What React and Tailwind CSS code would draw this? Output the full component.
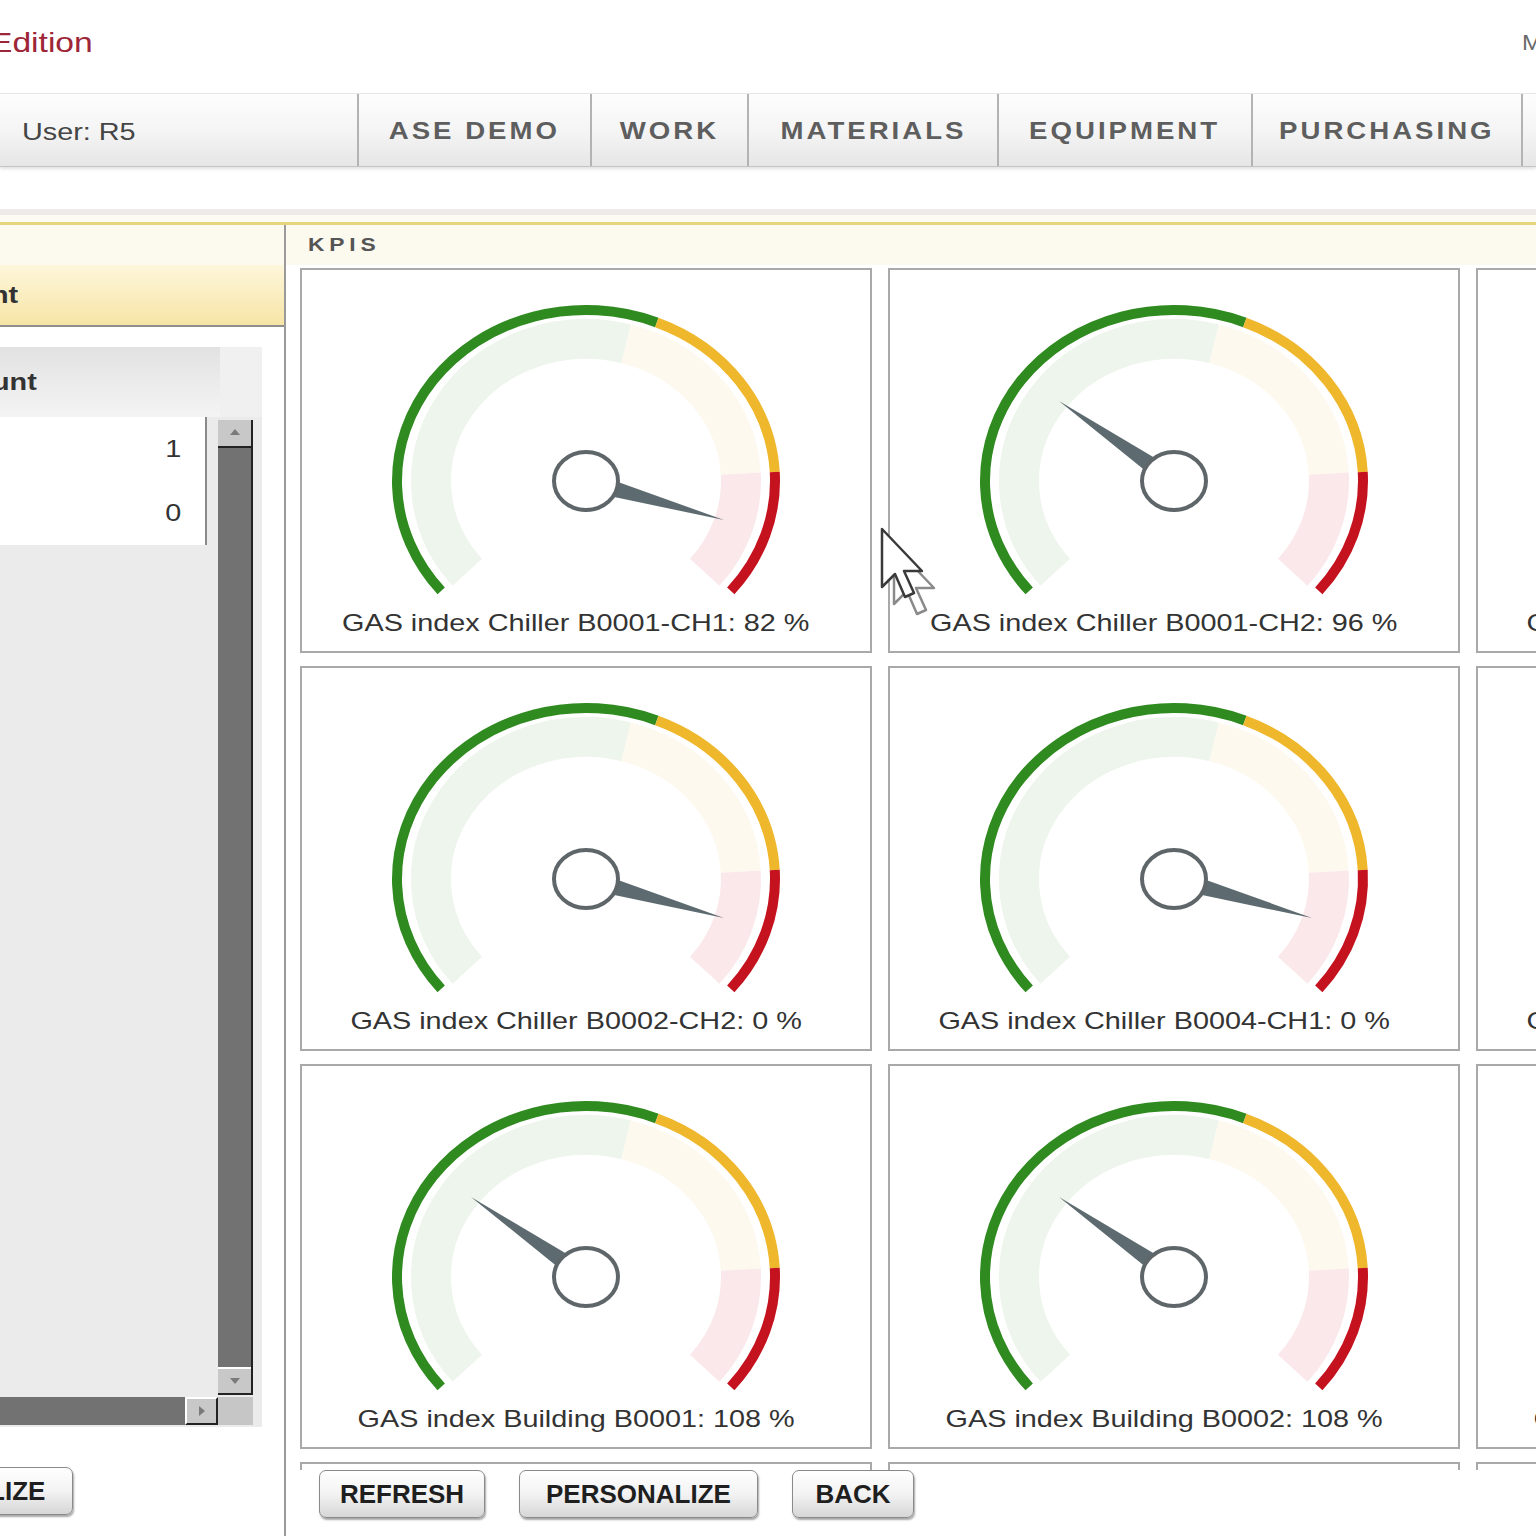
import React from "react";

function pt(cx, cy, rx, ry, a) {
  const r = (a * Math.PI) / 180;
  return [cx + rx * Math.cos(r), cy + ry * Math.sin(r)];
}
function arc(cx, cy, rx, ry, a0, a1) {
  const [x0, y0] = pt(cx, cy, rx, ry, a0);
  const [x1, y1] = pt(cx, cy, rx, ry, a1);
  const large = a1 - a0 > 180 ? 1 : 0;
  return `M${x0} ${y0} A${rx} ${ry} 0 ${large} 1 ${x1} ${y1}`;
}

function Gauge({ tip }) {
  const cx = 284;
  const cy = 211;
  const [tx, ty] = tip;
  const len = Math.hypot(tx, ty);
  const px = (-ty / len) * 10;
  const py = (tx / len) * 10;
  return (
    <svg width="568" height="339" viewBox="0 0 568 339" className="block">
      <path d={arc(cx, cy, 155, 142, 140, 285)} stroke="#eef5ec" strokeWidth="40" fill="none" />
      <path d={arc(cx, cy, 155, 142, 285, 357)} stroke="#fef9ef" strokeWidth="40" fill="none" />
      <path d={arc(cx, cy, 155, 142, 357, 400)} stroke="#fbe8ea" strokeWidth="40" fill="none" />
      <path d={arc(cx, cy, 189, 171, 140, 292)} stroke="#2f8a1f" strokeWidth="10" fill="none" />
      <path d={arc(cx, cy, 189, 171, 292, 357)} stroke="#efb72c" strokeWidth="10" fill="none" />
      <path d={arc(cx, cy, 189, 171, 357, 400)} stroke="#c5121f" strokeWidth="10" fill="none" />
      <polygon
        points={`${cx + tx},${cy + ty} ${cx + px},${cy + py} ${cx - px},${cy - py}`}
        fill="#5d6b70"
      />
      <ellipse cx={cx} cy={cy} rx="32" ry="29" fill="white" stroke="#5f6669" strokeWidth="4" />
    </svg>
  );
}

const A = [138, 39];
const B = [-115, -80];

const cards = [
  { label: "GAS index Chiller B0001-CH1: 82 %", tip: A },
  { label: "GAS index Chiller B0001-CH2: 96 %", tip: B },
  { label: "GAS index Chiller B0002-CH1: 8 %", tip: A },
  { label: "GAS index Chiller B0002-CH2: 0 %", tip: A },
  { label: "GAS index Chiller B0004-CH1: 0 %", tip: A },
  { label: "GAS index Chiller B0004-CH2: 0 %", tip: A },
  { label: "GAS index Building B0001: 108 %", tip: B },
  { label: "GAS index Building B0002: 108 %", tip: B },
  { label: "GAS index Building B0003: 108 %", tip: B },
  { label: "GAS index Building B0004: 108 %", tip: B },
  { label: "GAS index Building B0005: 108 %", tip: B },
  { label: "GAS index Building B0006: 108 %", tip: B },
];

const tabs = [
  { t: "ASE DEMO", w: "w-[233px]" },
  { t: "WORK", w: "w-[157px]" },
  { t: "MATERIALS", w: "w-[250px]" },
  { t: "EQUIPMENT", w: "w-[254px]" },
  { t: "PURCHASING", w: "w-[270px]" },
  { t: "REPORTS", w: "w-[200px]" },
];

function Card({ label, tip }) {
  return (
    <div className="h-[385px] w-[572px] border-2 border-[#a9a9a9] bg-white flex flex-col">
      <Gauge tip={tip} />
      <div className="h-[28px] pr-[20px] flex justify-center items-center whitespace-nowrap text-[24px] leading-[28px] text-[#333]">
        <span className="inline-block origin-center scale-x-[1.2]">{label}</span>
      </div>
    </div>
  );
}

function Btn({ children, w }) {
  return (
    <div
      className={`${w} h-[48px] shrink-0 rounded-[7px] border border-[#8a8a8a] bg-linear-to-b from-white via-[#f3f3f3] to-[#d6d6d6] shadow-[1px_2px_2px_rgba(0,0,0,0.35)] flex items-center justify-center text-[26px] font-bold text-[#1f1f1f] whitespace-nowrap`}
    >
      {children}
    </div>
  );
}

function Tri({ dir }) {
  const d =
    dir === "up" ? "M2 9 L7 3 L12 9 Z" : dir === "down" ? "M2 4 L7 10 L12 4 Z" : "M4 2 L10 7 L4 12 Z";
  return (
    <svg width="14" height="14" viewBox="0 0 14 14">
      <path d={d} fill="#7a7a7a" />
    </svg>
  );
}

export default function App() {
  return (
    <div className="font-['Liberation_Sans',Arial,sans-serif] relative w-[1536px] h-[1536px] overflow-hidden bg-white">
      {/* top header */}
      <div className="h-[93px] flex justify-between items-start pt-[27px]">
        <div className="ml-[-10px] text-[28px] leading-[32px] text-[#9d2638] whitespace-nowrap">
          <span className="inline-block origin-left scale-x-[1.2]">Edition</span>
        </div>
        <div className="w-[14px] overflow-hidden text-[22px] leading-[32px] text-[#6a6a6a] whitespace-nowrap">
          <span className="inline-block origin-left scale-x-[1.1]">My</span>
        </div>
      </div>

      {/* nav bar */}
      <div className="h-[74px] flex border-t border-[#e6e6e6] border-b border-b-[#c4c4c4] bg-linear-to-b from-[#fdfdfd] via-[#f5f5f5] to-[#e6e6e6] shadow-[0_2px_3px_rgba(0,0,0,0.12)]">
        <div className="w-[357px] shrink-0 flex items-center pl-[22px] pt-[3px] text-[24px] text-[#454545] whitespace-nowrap">
          <span className="inline-block origin-left scale-x-[1.2]">User: R5</span>
        </div>
        {tabs.map((t) => (
          <div
            key={t.t}
            className={`${t.w} shrink-0 border-l-2 border-[#b3b3b3] flex items-center justify-center pt-[3px] text-[23px] font-bold tracking-[2.5px] text-[#5e5e5e] whitespace-nowrap`}
          >
            <span className="inline-block origin-center scale-x-[1.2]">{t.t}</span>
          </div>
        ))}
      </div>

      {/* separator */}
      <div className="h-[42px]" />
      <div className="h-[6px] bg-[#eeeaea]" />
      <div className="h-[7px] bg-[#fcfaf3]" />
      <div className="h-[3px] bg-[#e6d57c]" />

      {/* main */}
      <div className="h-[1311px] flex">
        {/* left panel */}
        <div className="w-[286px] shrink-0 border-r-2 border-[#9a9a9a] flex flex-col">
          <div className="h-[40px] bg-[#fcf9ef]" />
          <div className="h-[62px] flex items-center bg-linear-to-b from-[#fdf6da] to-[#f7e5a6] border-b-2 border-[#8f8f8f] text-[24px] font-bold text-[#333] whitespace-nowrap">
            <span className="ml-[-9px] inline-block origin-left scale-x-[1.2]">nt</span>
          </div>
          <div className="h-[20px]" />
          <div className="w-[262px] h-[1080px] bg-[#ebebeb] flex flex-col">
            <div className="h-[70px] flex">
              <div className="w-[220px] flex items-center bg-linear-to-b from-[#e2e2e2] to-[#f4f4f4] text-[24px] font-bold text-[#333] whitespace-nowrap">
                <span className="ml-[-8px] inline-block origin-left scale-x-[1.2]">unt</span>
              </div>
              <div className="flex-1 bg-[#f0f0f0]" />
            </div>
            <div className="flex-1 flex">
              <div className="w-[218px] flex flex-col">
                <div className="w-[207px] border-r-2 border-[#8a8a8a] bg-white">
                  <div className="h-[64px] flex items-center justify-end pr-[24px] text-[24px] text-[#333]">
                    <span className="inline-block origin-right scale-x-[1.2]">1</span>
                  </div>
                  <div className="h-[64px] flex items-center justify-end pr-[24px] text-[24px] text-[#333]">
                    <span className="inline-block origin-right scale-x-[1.2]">0</span>
                  </div>
                </div>
              </div>
              <div className="w-[35px] mt-[3px] mb-[2px] bg-[#727272] flex flex-col justify-between border-r-2 border-[#222]">
                <div className="h-[28px] bg-[#c8c8c8] border-b-2 border-[#222] flex items-center justify-center">
                  <Tri dir="up" />
                </div>
                <div className="h-[28px] bg-[#c8c8c8] border-t-2 border-white border-b-2 border-b-[#222] flex items-center justify-center">
                  <Tri dir="down" />
                </div>
              </div>
              <div className="flex-1" />
            </div>
            <div className="h-[30px] flex">
              <div className="w-[218px] h-[28px] bg-[#727272] flex justify-end">
                <div className="w-[33px] h-[28px] bg-[#c8c8c8] border-l-2 border-t-2 border-white border-r-2 border-b-2 border-r-[#222] border-b-[#222] flex items-center justify-center">
                  <Tri dir="right" />
                </div>
              </div>
              <div className="w-[35px] h-[28px] bg-[#c6c6c6]" />
            </div>
          </div>
          <div className="pt-[40px]">
            <div className="ml-[-167px]">
              <Btn w="w-[240px]">PERSONALIZE</Btn>
            </div>
          </div>
        </div>

        {/* right panel */}
        <div className="flex-1 min-w-0 flex flex-col">
          <div className="h-[40px] shrink-0 flex items-center pl-[22px] bg-[#fcf9ef] text-[19px] font-bold tracking-[4px] text-[#555]">
            <span className="inline-block origin-left scale-x-[1.2]">KPIS</span>
          </div>
          <div className="h-[1205px] shrink-0 overflow-hidden pt-[3px] pl-[14px]">
            <div className="grid grid-cols-[572px_572px_572px] gap-x-[16px] gap-y-[13px]">
              {cards.map((c) => (
                <Card key={c.label} label={c.label} tip={c.tip} />
              ))}
            </div>
          </div>
          <div className="flex-1 bg-white pl-[33px] flex gap-[34px] items-start">
            <Btn w="w-[166px]">REFRESH</Btn>
            <Btn w="w-[239px]">PERSONALIZE</Btn>
            <Btn w="w-[122px]">BACK</Btn>
          </div>
        </div>
      </div>

      {/* mouse cursor */}
      <svg className="absolute left-[879px] top-[526px]" width="70" height="90" viewBox="0 0 70 90">
        <path d="M15 20 L15 78 L28 65 L38 88 L47 84 L37 62 L55 62 Z" fill="white" stroke="#8a8a8a" strokeWidth="2.5" strokeLinejoin="round" />
        <path d="M3 3 L3 61 L16 48 L26 71 L35 67 L25 45 L43 45 Z" fill="white" stroke="#3a3a3a" strokeWidth="2.5" strokeLinejoin="round" />
      </svg>
    </div>
  );
}
